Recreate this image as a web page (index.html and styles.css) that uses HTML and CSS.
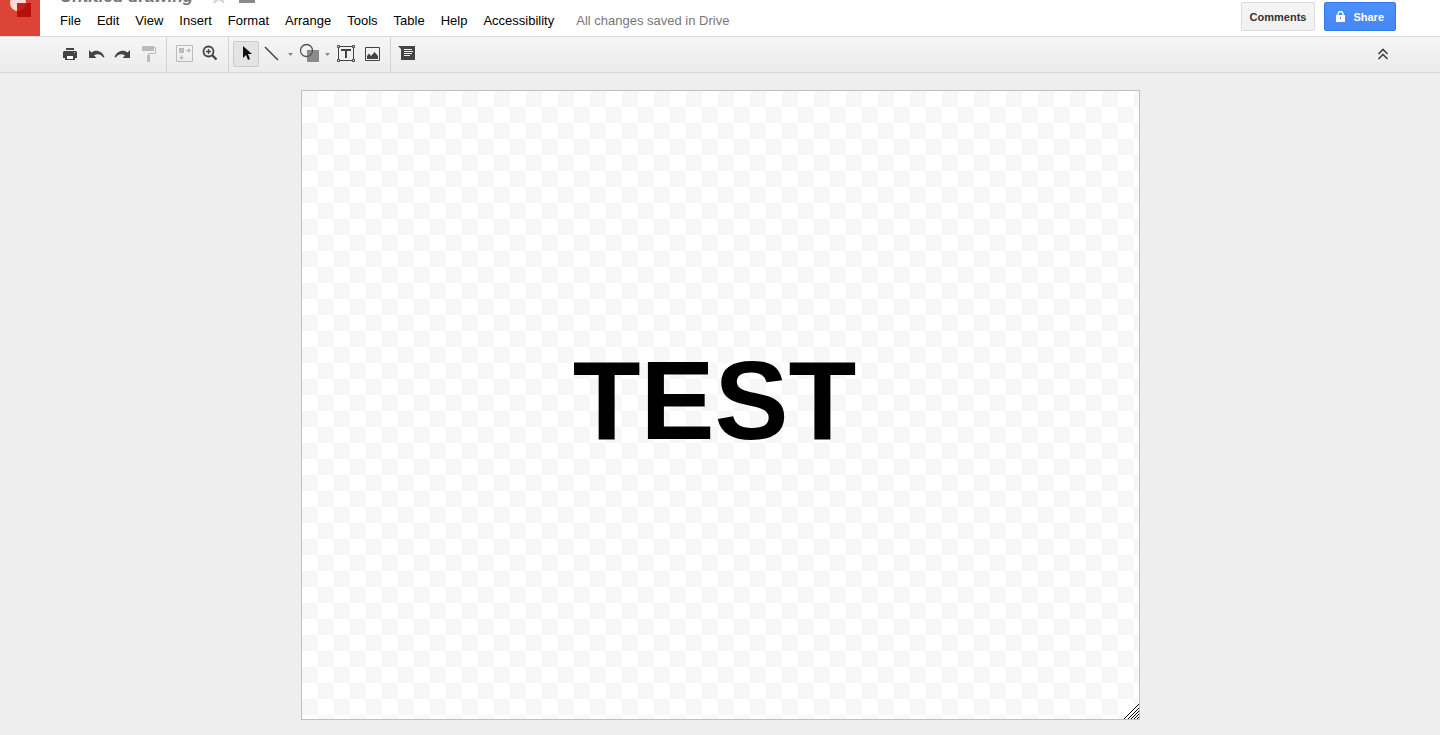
FILE: index.html
```html
<!DOCTYPE html>
<html lang="en">
<head>
    <meta charset="UTF-8">
    <meta name="viewport" content="width=device-width, initial-scale=1.0">
    <title>Untitled drawing</title>
    <link rel="stylesheet" href="styles.css">
</head>
<body>
    <header class="header">
        <a class="logo" href="#" aria-label="Drawings home">
            <svg width="40" height="36" viewBox="0 0 40 36">
                <circle cx="18" cy="3" r="8" fill="#fbdcd9"/>
                <rect x="17" y="3" width="14" height="14" fill="#b90f0a"/>
                <path d="M17 3h9a8 8 0 0 1-9 7.900z" fill="#c5221c"/>
            </svg>
        </a>
        <div class="doc">
            <div class="title-row">
                <h1 class="title">Untitled drawing</h1>
                <button class="title-button" aria-label="Star">
                    <svg width="16" height="16" viewBox="0 0 16 16"><path d="M8 0l2 5h5l-4 3.500 2 5.500-5-3.500-5 3.500 2-5.500-4-3.500h5z" fill="#e4e4e4" stroke="#ccc"/></svg>
                </button>
                <button class="title-button" aria-label="Move to folder">
                    <svg width="16" height="16" viewBox="0 0 16 16"><path d="M0 2h6l2 2h8v10H0z" fill="#8a8a8a"/></svg>
                </button>
            </div>
            <nav class="menu">
                <a href="#">File</a>
                <a href="#">Edit</a>
                <a href="#">View</a>
                <a href="#">Insert</a>
                <a href="#">Format</a>
                <a href="#">Arrange</a>
                <a href="#">Tools</a>
                <a href="#">Table</a>
                <a href="#">Help</a>
                <a href="#">Accessibility</a>
                <span class="status">All changes saved in Drive</span>
            </nav>
        </div>
        <div class="actions">
            <button class="button">Comments</button>
            <button class="button button-share">
                <svg width="9" height="11" viewBox="0 0 9 11"><path d="M2 5V3a2.500 2.500 0 0 1 5 0v2" fill="none" stroke="#fff" stroke-width="1.300"/><path fill-rule="evenodd" d="M0 4h9v7H0zM4 6v2h1V6z" fill="#fff"/></svg>
                Share
            </button>
        </div>
    </header>

    <div class="toolbar">
        <button class="tool" aria-label="Print">
            <svg width="22" height="22" viewBox="0 0 22 22" fill="#444">
                <path d="M7 5h8v2H7zM5 8h12l1 1v6H4V9z"/>
                <path d="M6 12h10v5H6z"/>
                <path d="M8 13h6v3H8z" fill="#fff"/>
                <path d="M15 9h1v1h-1z" fill="#ddd"/>
            </svg>
        </button>
        <button class="tool" aria-label="Undo">
            <svg width="22" height="22" viewBox="0 0 22 22"><path d="M4 7v8h7.500L9 12.500c3-2 7-1.500 9 2l1.500-.5C17 8 11 6 6.500 9.500z" fill="#444"/></svg>
        </button>
        <button class="tool" aria-label="Redo">
            <svg width="22" height="22" viewBox="0 0 22 22"><path d="M19 7v8h-7.500l2.500-2.500c-3-2-7-1.500-9 2L3.500 14C6 8 12 6 16.500 9.500z" fill="#444"/></svg>
        </button>
        <button class="tool" aria-label="Paint format">
            <svg width="22" height="22" viewBox="0 0 22 22"><path d="M5 3h12v5H5zM10 12h3v7h-3z" fill="#bbb"/><path d="M17 4.500h1.500v6h-7V13" fill="none" stroke="#bbb"/></svg>
        </button>
        <span class="separator"></span>
        <button class="tool" aria-label="Zoom to fit">
            <svg width="22" height="22" viewBox="0 0 22 22"><path d="M3.500 2.500h16v16h-16z" fill="none" stroke="#bbb"/><path d="M6 5h5v5H6zM13 7h2V5l3 2.500-3 2.500V8h-2zM8 12h1v2h2l-2.500 3L6 14h2z" fill="#bbb"/></svg>
        </button>
        <button class="tool" aria-label="Zoom">
            <svg width="22" height="22" viewBox="0 0 22 22" fill="none" stroke="#444"><circle cx="9.500" cy="8.500" r="5" stroke-width="1.800"/><path d="M13 12l4.500 4.500" stroke-width="2.400"/><path d="M9.500 6v5M7 8.500h5" stroke-width="1.300"/></svg>
        </button>
        <span class="separator"></span>
        <button class="tool tool-active" aria-label="Select">
            <svg width="22" height="22" viewBox="0 0 22 22"><path d="M8 3v12l3-3 2 5 2-1-2-5h4z" fill="#111"/></svg>
        </button>
        <button class="tool" aria-label="Line">
            <svg width="22" height="22" viewBox="0 0 22 22"><path d="M4 4l13 13" stroke="#444" stroke-width="1.500"/></svg>
        </button>
        <button class="tool-arrow" aria-label="Line options">
            <svg width="5" height="3" viewBox="0 0 5 3"><path d="M0 0h5L2.500 3z" fill="#888"/></svg>
        </button>
        <button class="tool" aria-label="Shape">
            <svg width="22" height="22" viewBox="0 0 22 22"><path d="M9 7h12v12H9z" fill="#8a8a8a"/><circle cx="8.500" cy="7.500" r="6" fill="none" stroke="#555" stroke-width="1.300"/></svg>
        </button>
        <button class="tool-arrow" aria-label="Shape options">
            <svg width="5" height="3" viewBox="0 0 5 3"><path d="M0 0h5L2.500 3z" fill="#888"/></svg>
        </button>
        <button class="tool" aria-label="Text box">
            <svg width="22" height="22" viewBox="0 0 22 22"><path d="M3.500 3.500h15v14h-15z" fill="none" stroke="#444"/><path d="M2.500 2.500h2v2h-2zM17.500 2.500h2v2h-2zM2.500 16.500h2v2h-2zM17.500 16.500h2v2h-2z" fill="#f1f1f1" stroke="#444"/><path d="M6 6h10v2h-4v7h-2V8H6z" fill="#444"/></svg>
        </button>
        <button class="tool" aria-label="Image">
            <svg width="22" height="22" viewBox="0 0 22 22"><path d="M4.500 4.500h14v13h-14z" fill="none" stroke="#444"/><path d="M6 16v-3l2-2.500 2 2.500 3.500-4 3.500 4v3z" fill="#444"/></svg>
        </button>
        <span class="separator"></span>
        <button class="tool" aria-label="Add comment">
            <svg width="22" height="22" viewBox="0 0 22 22"><path d="M1 3h17v14H4V6z" fill="#444"/><path d="M7 6.500h8M7 8.500h9M7 10.500h8M7 12.500h6" stroke="#eee"/></svg>
        </button>
        <button class="tool tool-last" aria-label="Hide the menus">
            <svg width="22" height="22" viewBox="0 0 22 22"><path d="M6.500 11L11 6.500l4.500 4.500M6.500 16l4.500-4.500 4.500 4.500" fill="none" stroke="#444" stroke-width="1.600"/></svg>
        </button>
    </div>

    <main class="stage">
        <div class="canvas">
            <p class="canvas-text">TEST</p>
            <svg class="resize" width="15" height="15" viewBox="0 0 15 15" shape-rendering="crispEdges"><path d="M0 15L15 0M4 15L15 4M7 15l8-8M10 15l5-5M13 15l2-2" stroke="#000"/></svg>
        </div>
    </main>
</body>
</html>
```
FILE: styles.css
```css
* {
    box-sizing: border-box;
}

body {
    display: flex;
    flex-direction: column;
    height: 100vh;
    margin: 0;
    overflow: hidden;
    background-color: #eee;
    font-family: Arial, "Liberation Sans", sans-serif;
    font-size: 13px;
}

button {
    display: flex;
    align-items: center;
    justify-content: center;
    padding: 0;
    border: 0;
    background: none;
    font-family: inherit;
    cursor: pointer;
}

svg {
    flex: none;
}

/* Header */
.header {
    display: flex;
    align-items: flex-start;
    overflow: hidden;
    background-color: #fff;
    flex: none;
}

.logo {
    display: flex;
    background-color: #db4437;
}

.doc {
    padding-left: 20px;
}

/* the title row is scrolled partly out of view */
.title-row {
    display: flex;
    align-items: center;
    margin-top: -13px;
    height: 20px;
}

.title {
    margin: 0 18px 0 0;
    color: #777;
    font-size: 17px;
    font-style: italic;
    line-height: 20px;
}

.title-button {
    margin-right: 12px;
}

.menu {
    display: flex;
    gap: 16px;
    line-height: 28px;
    white-space: nowrap;
}

.menu a {
    color: #000;
    text-decoration: none;
}

.status {
    padding-left: 6px;
    color: #777;
}

.actions {
    display: flex;
    gap: 9px;
    margin-left: auto;
    padding: 2px 44px 0 0;
}

.button {
    height: 29px;
    padding: 0 8px;
    border: 1px solid #dcdcdc;
    border-radius: 2px;
    background: linear-gradient(#f5f5f5, #f1f1f1);
    color: #333;
    font-size: 11px;
    font-weight: bold;
}

.button-share {
    gap: 8px;
    padding: 0 11px;
    border-color: #3079ed;
    background: linear-gradient(#4d90fe, #4787ed);
    color: #fff;
}

/* Toolbar */
.toolbar {
    display: flex;
    flex: none;
    padding: 0 44px 0 57px;
    border-top: 1px solid #d8d8d8;
    border-bottom: 1px solid #d8d8d8;
    background: linear-gradient(#f5f5f5, #ececec);
}

.tool {
    width: 26px;
    height: 26px;
    margin: 4px 0 5px;
}

.tool-active {
    border: 1px solid #ccc;
    border-radius: 2px;
    background-color: #e4e4e4;
}

.tool-arrow {
    width: 11px;
}

.tool-last {
    margin-left: auto;
}

.separator {
    width: 1px;
    margin: 0 4px 0 5px;
    background-color: #d3d3d3;
}

/* Drawing area */
.stage {
    display: flex;
    flex: 1;
    justify-content: center;
    min-height: 0;
    padding: 17px 0 15px 1px;
}

.canvas {
    position: relative;
    display: flex;
    align-items: center;
    justify-content: center;
    aspect-ratio: 4 / 3;
    border: 1px solid #c0c0c0;
    background: repeating-conic-gradient(#fff 0 25%, #f7f7f7 0 50%) 0 0 / 32px 32px;
    box-sizing: content-box;
}

.canvas-text {
    margin: 0;
    padding: 0 12px 8px 0;
    font-size: 111px;
    font-weight: bold;
    line-height: 128px;
}

.resize {
    position: absolute;
    right: 0;
    bottom: 0;
}
```
